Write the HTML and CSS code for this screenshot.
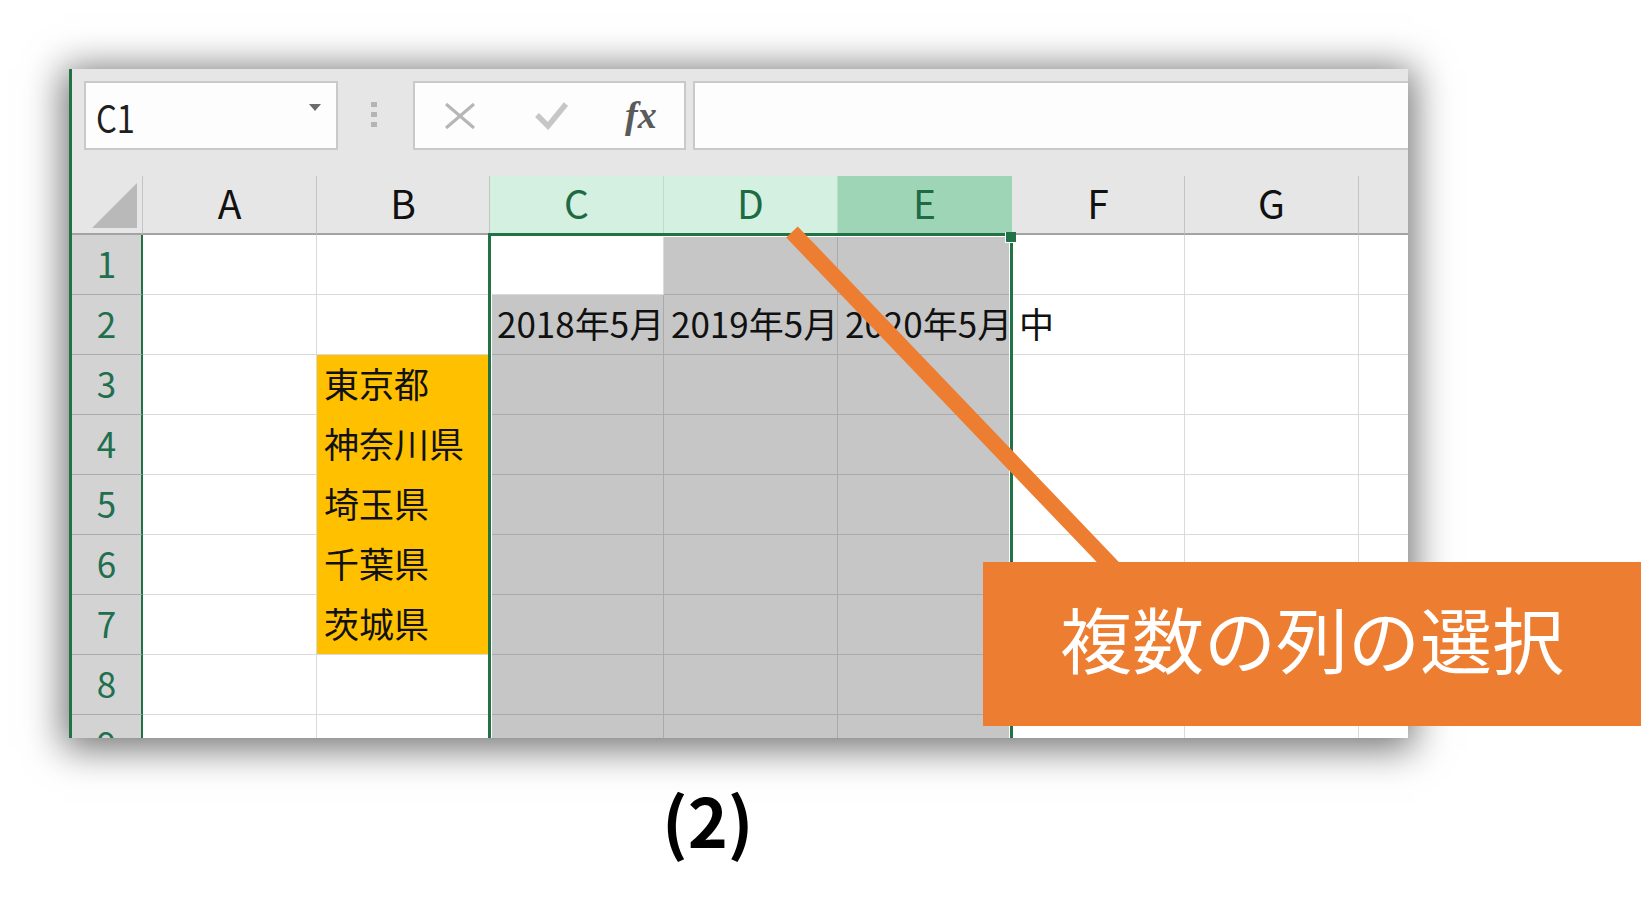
FILE: index.html
```html
<!DOCTYPE html>
<html lang="ja">
<head>
<meta charset="utf-8">
<title>複数の列の選択</title>
<link rel="stylesheet" href="styles.css">
</head>
<body>
<div class="page">
  <div class="window">
    <div class="formula-bar">
      <div class="name-box">
        <span class="name-text">C1</span>
        <span class="name-arrow"></span>
      </div>
      <div class="grip"><i></i><i></i><i></i></div>
      <div class="func-box">
        <svg class="icon-x" width="30" height="26" viewBox="0 0 30 26"><path d="M1 1 L29 25 M29 1 L1 25" fill="none" stroke="#b6b6b6" stroke-width="3.2"/></svg>
        <svg class="icon-check" width="33" height="29" viewBox="0 0 33 29"><path d="M2 14 L13 25 L31 3" fill="none" stroke="#c6c6c6" stroke-width="5.5"/></svg>
        <span class="fx">fx</span>
      </div>
      <div class="formula-input"></div>
    </div>
    <div class="sheet">
      <div class="corner"><span class="corner-tri"></span></div>
      <div class="ch">A</div>
      <div class="ch">B</div>
      <div class="ch hl">C</div>
      <div class="ch hl">D</div>
      <div class="ch act">E</div>
      <div class="ch">F</div>
      <div class="ch">G</div>
      <div class="ch"></div>

      <div class="rh">1</div>
      <div class="c"></div><div class="c"></div><div class="c"></div>
      <div class="c sel"></div><div class="c sel"></div>
      <div class="c"></div><div class="c"></div><div class="c"></div>

      <div class="rh">2</div>
      <div class="c"></div><div class="c"></div>
      <div class="c sel">2018年5月</div><div class="c sel">2019年5月</div><div class="c sel">2020年5月</div>
      <div class="c">中</div><div class="c"></div><div class="c"></div>

      <div class="rh">3</div>
      <div class="c"></div><div class="c fill">東京都</div>
      <div class="c sel"></div><div class="c sel"></div><div class="c sel"></div>
      <div class="c"></div><div class="c"></div><div class="c"></div>

      <div class="rh">4</div>
      <div class="c"></div><div class="c fill">神奈川県</div>
      <div class="c sel"></div><div class="c sel"></div><div class="c sel"></div>
      <div class="c"></div><div class="c"></div><div class="c"></div>

      <div class="rh">5</div>
      <div class="c"></div><div class="c fill">埼玉県</div>
      <div class="c sel"></div><div class="c sel"></div><div class="c sel"></div>
      <div class="c"></div><div class="c"></div><div class="c"></div>

      <div class="rh">6</div>
      <div class="c"></div><div class="c fill">千葉県</div>
      <div class="c sel"></div><div class="c sel"></div><div class="c sel"></div>
      <div class="c"></div><div class="c"></div><div class="c"></div>

      <div class="rh">7</div>
      <div class="c"></div><div class="c fill fill-last">茨城県</div>
      <div class="c sel"></div><div class="c sel"></div><div class="c sel"></div>
      <div class="c"></div><div class="c"></div><div class="c"></div>

      <div class="rh">8</div>
      <div class="c"></div><div class="c"></div>
      <div class="c sel"></div><div class="c sel"></div><div class="c sel"></div>
      <div class="c"></div><div class="c"></div><div class="c"></div>

      <div class="rh rh-partial">9</div>
      <div class="c"></div><div class="c"></div>
      <div class="c sel"></div><div class="c sel"></div><div class="c sel"></div>
      <div class="c"></div><div class="c"></div><div class="c"></div>

      <div class="selection"><span class="handle"></span></div>
    </div>
  </div>
  <div class="caption">(2)</div>
  <svg class="pointer" width="1641" height="903" viewBox="0 0 1641 903">
    <line x1="792" y1="232" x2="1125" y2="580" stroke="#ed7d31" stroke-width="16"/>
  </svg>
  <div class="callout">複数の列の選択</div>
</div>
</body>
</html>
```
FILE: styles.css
```css
* { box-sizing: border-box; }

html, body {
  margin: 0;
  padding: 0;
  background: #ffffff;
}

body {
  font-family: "Noto Sans CJK JP", "Noto Sans", sans-serif;
  color: #000;
}

.page {
  position: relative;
  width: 1641px;
  height: 903px;
  overflow: hidden;
  padding-top: 69px;
}

/* ---------- Excel window ---------- */
.window {
  position: relative;
  margin-left: 69px;
  width: 1339px;
  height: 669px;
  overflow: hidden;
  border-left: 3px solid #217346;
  background: #e6e6e6;
  box-shadow: 0 5px 36px 6px rgba(0, 0, 0, 0.55);
}

.formula-bar {
  display: flex;
  align-items: flex-start;
  height: 107px;
  padding: 12px 0 0 12px;
  background: #e6e6e6;
}

.name-box {
  display: flex;
  align-items: flex-end;
  justify-content: space-between;
  width: 254px;
  height: 69px;
  padding: 0 15px 12px 10px;
  background: #fdfdfd;
  border: 2px solid #c9c9c9;
}

.name-text {
  font-size: 38px;
  line-height: 38px;
  color: #1f1f1f;
  transform: scaleX(0.86);
  transform-origin: left center;
}

.name-arrow {
  align-self: center;
  width: 0;
  height: 0;
  margin-bottom: 4px;
  border-left: 6px solid transparent;
  border-right: 6px solid transparent;
  border-top: 7px solid #6b6b6b;
}

.grip {
  display: flex;
  flex-direction: column;
  gap: 5px;
  margin: 21px 0 0 33px;
}

.grip i {
  display: block;
  width: 6px;
  height: 5px;
  background: #b4b4b4;
}

.func-box {
  display: flex;
  align-items: center;
  width: 273px;
  height: 69px;
  margin-left: 36px;
  padding-left: 30px;
  background: #fdfdfd;
  border: 2px solid #c9c9c9;
}

.icon-x { flex: none; }

.icon-check {
  flex: none;
  margin-left: 60px;
}

.fx {
  margin-left: 57px;
  font-family: "Liberation Serif", serif;
  font-style: italic;
  font-weight: 700;
  font-size: 38px;
  line-height: 38px;
  color: #5a5a5a;
  margin-top: -2px;
}

.formula-input {
  flex: 1;
  height: 69px;
  margin-left: 7px;
  margin-right: -20px;
  background: #fdfdfd;
  border: 2px solid #c9c9c9;
}

/* ---------- Sheet grid ---------- */
.sheet {
  position: relative;
  display: grid;
  grid-template-columns: 71px 174px 173px 174px 174px 174px 173px 174px 80px;
  grid-template-rows: 59px repeat(9, 60px);
  background: #ffffff;
}

.corner {
  position: relative;
  background: #e6e6e6;
  border-right: 1px solid #c4c4c4;
  border-bottom: 2px solid #a3a3a3;
}

.corner-tri {
  position: absolute;
  left: 20px;
  top: 7px;
  width: 45px;
  height: 45px;
  background: #b9b9b9;
  clip-path: polygon(100% 0, 100% 100%, 0 100%);
}

.ch {
  display: flex;
  align-items: center;
  justify-content: center;
  background: #e6e6e6;
  border-right: 1px solid #c4c4c4;
  border-bottom: 2px solid #a3a3a3;
  font-size: 39px;
  line-height: 1;
  color: #111;
  padding-bottom: 4px;
}

.ch.hl {
  background: #d3f0e0;
  border-right-color: #bfdccb;
  color: #1e6a43;
}

.ch.act {
  background: #9fd5b7;
  border-right-color: #9fd5b7;
  color: #1e6a43;
}

.rh {
  display: flex;
  align-items: center;
  justify-content: center;
  background: #d3d3d3;
  border-right: 2px solid #217346;
  border-bottom: 1px solid #ababab;
  font-size: 35px;
  line-height: 1;
  color: #216f4e;
  padding-bottom: 5px;
}

.c {
  display: flex;
  align-items: center;
  padding-left: 7px;
  padding-bottom: 4px;
  background: #ffffff;
  border-right: 1px solid #dadada;
  border-bottom: 1px solid #dadada;
  font-size: 35px;
  line-height: 1;
  white-space: nowrap;
  color: #111;
}

.c.sel {
  background: #c6c6c6;
  border-right-color: #aaaaaa;
  border-bottom-color: #aaaaaa;
}

.c.fill {
  background: #ffc000;
  border-right-color: #ffc000;
  border-bottom-color: #ffc000;
}

.c.fill-last {
  border-bottom-color: #dadada;
}

.selection {
  position: absolute;
  left: 416px;
  top: 57px;
  width: 525px;
  height: 620px;
  border: 3px solid #217346;
  box-shadow: inset 0 0 0 1px #ffffff;
  pointer-events: none;
}

.handle {
  position: absolute;
  top: -4px;
  right: -6px;
  width: 11px;
  height: 11px;
  background: #217346;
  border-left: 1px solid #ffffff;
  border-bottom: 1px solid #ffffff;
}

/* ---------- caption ---------- */
.caption {
  margin: 47px 0 0 662px;
  font-family: "Noto Sans CJK JP", "Noto Sans", sans-serif;
  font-weight: 700;
  font-size: 68px;
  line-height: 68px;
  color: #000;
}

/* ---------- annotation overlay ---------- */
.pointer {
  position: absolute;
  left: 0;
  top: 0;
  pointer-events: none;
}

.callout {
  position: absolute;
  left: 983px;
  top: 562px;
  right: 0;
  height: 164px;
  display: flex;
  align-items: center;
  justify-content: center;
  padding-bottom: 14px;
  background: #ed7d31;
  color: #ffffff;
  font-size: 72px;
  font-weight: 400;
  line-height: 1;
}
```
